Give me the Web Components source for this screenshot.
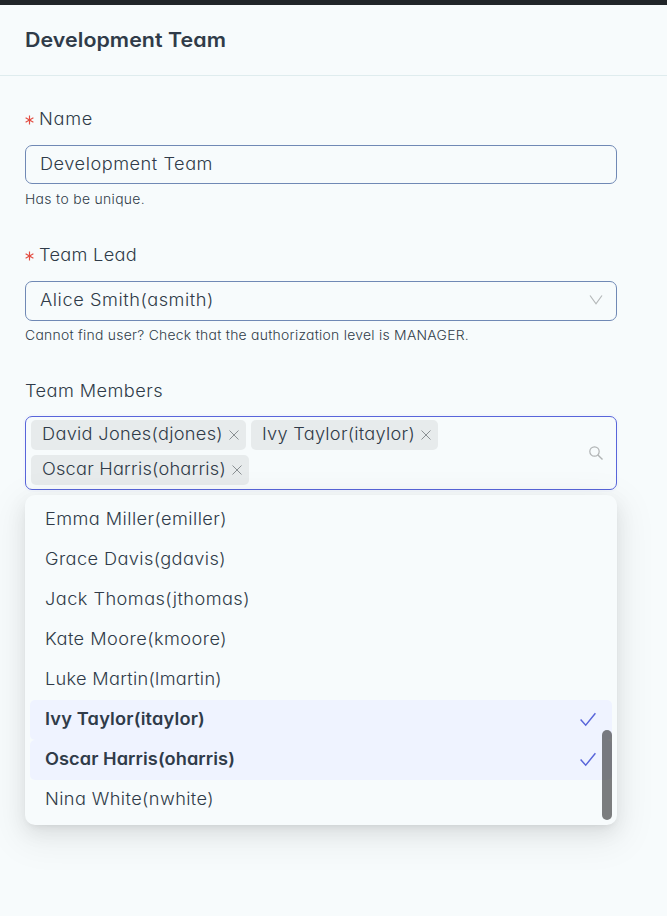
<!DOCTYPE html>
<html lang="en"><head><meta charset="utf-8"><title>Development Team</title>
<style>
html,body{margin:0;height:100%;overflow:hidden}
body{background:#f7fbfc;color:#303b49;font:300 17px/26px Inter,"Open Sans",sans-serif;font-feature-settings:"cv11"}
</style></head><body>
<team-page>
 <page-header><fit-text w="200">Development Team</fit-text></page-header>
 <form-field required>
  <fit-text slot="label" w="53">Name</fit-text>
  <input-box style="--h:39px"><fit-text w="172">Development Team</fit-text></input-box>
  <fit-text slot="help" w="119">Has to be unique.</fit-text>
 </form-field>
 <form-field required style="--help:3px">
  <fit-text slot="label" w="97">Team Lead</fit-text>
  <input-box style="--h:40px"><fit-text w="173">Alice Smith(asmith)</fit-text><line-icon slot="icon" name="down"></line-icon></input-box>
  <fit-text slot="help" w="443">Cannot find user? Check that the authorization level is MANAGER.</fit-text>
 </form-field>
 <form-field style="--gap:12px">
  <fit-text slot="label" w="137">Team Members</fit-text>
  <multi-select>
   <user-tag><fit-text w="180">David Jones(djones)</fit-text></user-tag>
   <user-tag><fit-text w="152">Ivy Taylor(itaylor)</fit-text></user-tag>
   <user-tag><fit-text w="183">Oscar Harris(oharris)</fit-text></user-tag>
   <option-list slot="menu">
    <user-option><fit-text w="181">Emma Miller(emiller)</fit-text></user-option>
    <user-option><fit-text w="180">Grace Davis(gdavis)</fit-text></user-option>
    <user-option><fit-text w="204">Jack Thomas(jthomas)</fit-text></user-option>
    <user-option><fit-text w="181">Kate Moore(kmoore)</fit-text></user-option>
    <user-option><fit-text w="176">Luke Martin(lmartin)</fit-text></user-option>
    <user-option selected><fit-text w="159">Ivy Taylor(itaylor)</fit-text></user-option>
    <user-option selected><fit-text w="189">Oscar Harris(oharris)</fit-text></user-option>
    <user-option><fit-text w="168">Nina White(nwhite)</fit-text></user-option>
   </option-list>
  </multi-select>
 </form-field>
</team-page>
<script>
const define=(name,html,setup)=>customElements.define(name,class extends HTMLElement{
  connectedCallback(){
    if(this.shadowRoot)return;
    this.attachShadow({mode:'open'}).innerHTML=html;
    if(setup)setup(this);
  }
});
const ICONS={
  down:['14','0 0 14 14','<path d="M1 2.500l6 8.300L13 2.500" fill="none" stroke="currentColor" stroke-width="1.200"/>'],
  close:['10','0 0 10 10','<path d="M.5.5l9 9M9.500.500l-9 9" fill="none" stroke="currentColor" stroke-width=".95"/>'],
  search:['14','0 0 14 14','<circle cx="5.500" cy="5.500" r="4.700" fill="none" stroke="currentColor" stroke-width="1.200"/><path d="M8.900 8.900l4.600 4.600" stroke="currentColor" stroke-width="1.400"/>'],
  check:['16','0 0 16 16','<path d="M.6 7.600L5.700 13.200 15.400 1.300" fill="none" stroke="currentColor" stroke-width="1.450"/>']
};
define('line-icon','<style>:host{display:block;flex:none;line-height:0}svg{display:block}</style>',el=>{
  const [s,v,p]=ICONS[el.getAttribute('name')];
  el.shadowRoot.innerHTML+=`<svg width="${s}" height="${s}" viewBox="${v}">${p}</svg>`;
});
define('team-page','<style>:host{display:flex;flex-direction:column;height:916px;box-sizing:border-box;border-top:5px solid #212529}</style><slot></slot>');
define('page-header','<style>:host{display:block;height:70px;box-sizing:content-box;border-bottom:1px solid #dfecee;padding-left:25px;font-size:20px;line-height:71px;font-weight:600;margin-bottom:30px}</style><slot></slot>');
define('form-field',`<style>
:host{display:block;padding:0 50px 0 25px;height:136px;box-sizing:border-box}
.label{display:flex;align-items:center;height:26px;margin-bottom:var(--gap,13px)}
.star{display:none;width:14px;color:#e34d42}
:host([required]) .star{display:block}
.star svg{display:block;margin-top:2px}
.help{font-size:13px;line-height:22px;margin-top:var(--help,4px);height:22px}
</style><div class="label"><span class="star"><svg width="9" height="10" viewBox="0 0 9 10"><path d="M4.500 .500v9M.6 2.700l7.800 4.600M8.400 2.700L.6 7.300" stroke="currentColor" stroke-width="1.150"/></svg></span><slot name="label"></slot></div><slot></slot><div class="help"><slot name="help"></slot></div>`);
define('input-box',`<style>
:host{display:flex;align-items:flex-start;justify-content:space-between;box-sizing:border-box;height:var(--h);border:1px solid #7089b5;border-radius:7px;padding:0 13px 0 14px;line-height:36px}
::slotted(line-icon){color:#b5b8b9;margin-top:11px}
</style><slot></slot><slot name="icon"></slot>`);
define('multi-select',`<style>
:host{display:block;position:relative}
.box{display:flex;align-items:center;height:74px;box-sizing:border-box;border:1px solid #5865da;border-radius:7px;padding:0 13px 0 5px;box-shadow:0 0 0 2px rgba(88,101,242,.025)}
.tags{display:flex;flex-wrap:wrap;gap:5px;flex:1;align-content:center;margin-top:-1px}
line-icon{color:#b0b3b4}
.menu{position:absolute;left:0;right:0;top:79px}
</style><div class="box"><div class="tags"><slot></slot></div><line-icon name="search"></line-icon></div><div class="menu"><slot name="menu"></slot></div>`);
define('user-tag',`<style>
:host{display:flex;box-sizing:border-box;height:30px;line-height:28px;border-radius:5px;background:#e7ebec;padding:0 7px 0 11px;gap:6px}
line-icon{color:#858b8e;margin-top:10px}
</style><slot></slot><line-icon name="close"></line-icon>`);
define('option-list',`<style>
:host{display:block;position:relative;padding:5px;background:#f7fbfc;border-radius:10px;box-shadow:0 7px 20px rgba(0,0,0,.08),0 4px 8px -5px rgba(0,0,0,.12),0 11px 35px 10px rgba(0,0,0,.05)}
.thumb{position:absolute;right:5px;bottom:5px;width:10px;height:90px;border-radius:5px;background:rgba(0,0,0,.5)}
</style><slot></slot><div class="thumb"></div>`);
define('user-option',`<style>
:host{display:flex;justify-content:space-between;height:40px;line-height:38px;border-radius:5px;padding:0 16px 0 15px}
:host([selected]){background:#eff3ff;font-weight:600}
line-icon{display:none;color:#5865da;margin-top:12px}
:host([selected]) line-icon{display:block}
</style><slot></slot><line-icon name="check"></line-icon>`);
/* Widens a run of text, partly in its glyphs and partly in its tracking, to the width in its w attribute. */
define('fit-text','<style>:host{display:inline-block;white-space:nowrap;transform-origin:0 50%}</style><slot></slot>',el=>{
  const range=document.createRange();range.selectNodeContents(el);
  el._fit=()=>{
    const w=+el.getAttribute('w'),n=range.getBoundingClientRect().width;
    const s=Math.max(1,Math.min(1.07,w/n));
    el.style.letterSpacing=(((w+1)/s-n)/el.textContent.length).toFixed(3)+'px';
    el.style.width=(w+1)+'px';
    el.style.transform=`scaleX(${s.toFixed(4)})`;
  };
});
document.querySelectorAll('fit-text').forEach(e=>e._fit());
</script></body></html>
